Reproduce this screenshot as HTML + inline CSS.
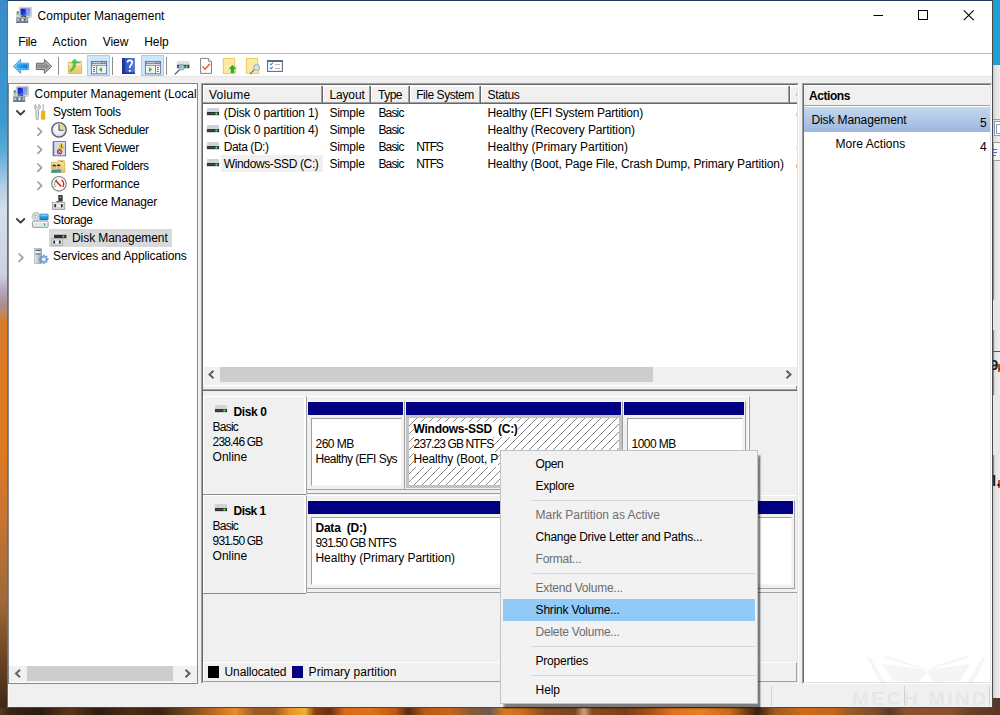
<!DOCTYPE html>
<html><head><meta charset="utf-8"><title>Computer Management</title>
<style>
html,body{margin:0;padding:0;}
body{width:1000px;height:715px;overflow:hidden;position:relative;background:#fff;font-family:"Liberation Sans",sans-serif;font-size:12px;color:#000;}
.a{position:absolute;box-sizing:border-box;}
.t{position:absolute;white-space:pre;line-height:16px;height:16px;}
svg{position:absolute;overflow:visible;}
#win{left:7px;top:0;width:986px;height:708px;background:#f0f0f0;border:1px solid #4a4a4a;border-top-color:#1b3a5c;border-left-color:rgba(20,30,45,.62);}
.hd{position:absolute;box-sizing:border-box;top:86px;height:18px;background:#f0f0f0;border-right:1px solid #696969;border-bottom:1px solid #696969;box-shadow:inset -1px -1px 0 #a0a0a0, inset 1px 1px 0 #fff;}
.sunk{border:1px solid #a0a0a0;border-right-color:#fff;border-bottom-color:#fff;}
.sunk2{border:1px solid #696969;border-right-color:#e3e3e3;border-bottom-color:#e3e3e3;}
.sep{position:absolute;left:531px;width:224px;height:1px;background:#d7d7d7;}
.navy{position:absolute;box-sizing:border-box;background:#000080;height:13px;}
.pbox{position:absolute;box-sizing:border-box;background:#fff;border:1px solid #a0a0a0;border-right-color:#f6f6f6;border-bottom-color:#f6f6f6;}
.cell{border-right:1px solid #a0a0a0;border-bottom:1px solid #a0a0a0;border-top:1px solid #f8f8f8;}

</style></head>
<body>
<div class="a" id="deskB" style="left:0;top:697px;width:1000px;height:18px;background:linear-gradient(90deg,#5a3a20 0px,#3a2414 10px,#2a1a10 40px,#5a3618 70px,#2e1c10 100px,#4a2c14 130px,#3a2210 160px,#7a4a20 190px,#c06a20 215px,#e88a28 235px,#9a5a28 255px,#a05a24 275px,#e8902a 290px,#f0b030 305px,#8a4010 315px,#6a3010 330px,#d86a18 345px,#e07018 370px,#c05814 395px,#5a2a10 408px,#b85a18 425px,#c86418 450px,#8a5a38 470px,#6a5a50 490px,#d87a20 505px,#c86a1c 525px,#8a4a20 545px,#7a4420 575px,#d0a080 584px,#8a4a20 592px,#7a4018 625px,#a85018 650px,#e07020 672px,#e88020 700px,#c86a18 730px,#6a3814 748px,#3a2010 758px,#a05a20 775px,#d06a18 805px,#c06418 835px,#9a5a28 850px,#7a4a28 878px,#5a3a28 890px,#8a5030 905px,#8a5030 950px,#6a4028 970px,#5a3624 1000px)"></div>
<div class="a" id="deskL" style="left:0;top:0;width:8px;height:708px;background:linear-gradient(#3a8cc8,#3c98d0 120px,#5aaad8 150px,#b0cce4 185px,#d4dfea 210px,#ccd0e0 275px,#b8a8bc 290px,#a88c90 305px,#c08a60 313px,#d87a28 322px,#e07a20 440px,#c87432 520px,#a06a38 600px,#6a4422 660px,#3a2412 715px)"></div>
<div class="a" id="deskR" style="left:992px;top:0;width:8px;height:698px;background:linear-gradient(90deg,#c4c4c4,#e4e4e4 4px,#ededed)"></div>
<div class="a" id="deskR2" style="left:992px;top:0;width:8px;height:65px;background:#1f9fd3"></div>
<div class="a" style="left:993px;top:119px;width:7px;height:1px;background:#9a9a9a"></div>
<div class="a" style="left:994px;top:121px;width:8px;height:15px;background:#fff;border:1px solid #8a9ab0"></div>
<div class="a" style="left:996px;top:124px;width:6px;height:10px;background:#fff;border:1px solid #8a9ab0"></div>
<div class="a" style="left:993px;top:142px;width:9px;height:19px;border:1px solid #a0a0a0;background:#f6f6f6"></div>
<div class="a" style="left:993px;top:149px;width:4px;height:1px;background:#3a6ac8"></div>
<div class="a" style="left:993px;top:152px;width:4px;height:1px;background:#3a6ac8"></div>
<div class="a" style="left:993px;top:155px;width:3px;height:1px;background:#3a6ac8"></div>
<div class="a" style="left:993px;top:160px;width:1px;height:320px;background:#8a8a8a"></div>
<div class="a" style="left:993px;top:351px;width:7px;height:1px;background:#555"></div>
<div class="a" style="left:993px;top:300px;width:7px;height:30px;background:#e6e6e6"></div>
<div class="a" style="left:993px;top:395px;width:7px;height:60px;background:#e8e8e8"></div>
<div class="a" style="left:998px;top:364px;width:2px;height:8px;background:#d04a10"></div>
<div class="a" style="left:998px;top:480px;width:2px;height:8px;background:#d04a10"></div>
<div class="a" style="left:993px;top:340px;width:7px;height:160px;overflow:hidden"><span class="t" style="left:-3px;top:17px;font-size:15px;font-weight:bold;color:#1a1a30">9.</span><span class="t" style="left:-1px;top:133px;font-size:15px;font-weight:bold;color:#1a1a30">l.</span></div>
<div class="a" id="win"></div>
<!-- title + menu -->
<div class="a" style="left:8px;top:1px;width:984px;height:52px;background:#fff"></div>
<div class="a" style="left:8px;top:53px;width:984px;height:1px;background:#b9b9b9"></div>
<!-- toolbar -->
<div class="a" style="left:8px;top:54px;width:984px;height:22px;background:#fff"></div>
<div class="a" style="left:8px;top:76px;width:984px;height:1px;background:#e6e6e6"></div>
<div class="a" style="left:87px;top:55px;width:23px;height:21px;background:#cce8ff;border:1px solid #99d1ff"></div>
<div class="a" style="left:141px;top:55px;width:23px;height:21px;background:#cce8ff;border:1px solid #99d1ff"></div>
<div class="a" style="left:58px;top:57px;width:1px;height:18px;background:#8d8d8d"></div>
<div class="a" style="left:112px;top:57px;width:1px;height:18px;background:#8d8d8d"></div>
<div class="a" style="left:166px;top:57px;width:1px;height:18px;background:#8d8d8d"></div>
<!-- tree panel -->
<div class="a" id="tree" style="left:8px;top:83px;width:190px;height:601px;background:#fff;border:1px solid #828790"></div>
<div class="a" style="left:49px;top:229px;width:123px;height:18px;background:#d9d9d9"></div>
<!-- tree hscroll -->
<div class="a" style="left:9px;top:666px;width:188px;height:16px;background:#f0f0f0"></div>
<div class="a" style="left:27px;top:666px;width:146px;height:15px;background:#cdcdcd"></div>
<!-- list panel -->
<div class="a sunk" style="left:201px;top:83px;width:598px;height:601px;"></div>
<div class="a sunk2" style="left:202px;top:84px;width:596px;height:599px;background:#fff"></div>
<div class="hd" style="left:203px;width:120px;"></div>
<div class="hd" style="left:323px;width:48px;"></div>
<div class="hd" style="left:371px;width:39px;"></div>
<div class="hd" style="left:410px;width:71px;"></div>
<div class="hd" style="left:481px;width:309px;"></div>
<div class="hd" style="left:790px;width:7px;border-right:none;box-shadow:inset 0 -1px 0 #a0a0a0, inset 1px 1px 0 #fff"></div>
<div class="a" style="left:203px;top:85px;width:594px;height:1px;background:#fff"></div>
<div class="a" style="left:221px;top:155px;width:102px;height:17px;background:#f0f0f0"></div>
<div class="a" style="left:796px;top:93px;width:1px;height:3px;background:#f6bd7c"></div><div class="a" style="left:796px;top:113px;width:1px;height:3px;background:#f6bd7c"></div><div class="a" style="left:796px;top:147px;width:1px;height:1px;background:#f6bd7c"></div><div class="a" style="left:796px;top:164px;width:1px;height:4px;background:#f6bd7c"></div>
<!-- list hscroll -->
<div class="a" style="left:204px;top:367px;width:593px;height:18px;background:#f0f0f0"></div>
<div class="a" style="left:220px;top:367px;width:433px;height:15px;background:#cdcdcd"></div>
<!-- splitter -->
<div class="a" style="left:203px;top:385px;width:594px;height:299px;background:#f0f0f0"></div>
<div class="a" style="left:203px;top:385px;width:594px;height:1px;background:#fff"></div>
<div class="a" style="left:203px;top:389px;width:594px;height:1px;background:#a4a4a4"></div>
<div class="a" style="left:203px;top:390px;width:594px;height:1px;background:#6a6a6a"></div>
<div class="a" style="left:796px;top:386px;width:1px;height:4px;background:#8a8a8a"></div>
<!-- disk 0 -->
<div class="a" style="left:203px;top:396px;width:101px;height:98px;background:#f0f0f0;border-top:1px solid #fff;border-left:1px solid #fff"></div>
<div class="a" style="left:203px;top:494px;width:103px;height:1px;background:#8c8c8c"></div>
<div class="a" style="left:304px;top:397px;width:2px;height:97px;background:#fff"></div>
<div class="a" style="left:306px;top:396px;width:444px;height:98px;border-left:1px solid #a0a0a0;border-top:1px solid #fff;border-right:1px solid #a0a0a0;border-bottom:1px solid #a0a0a0;box-shadow:inset -1px 0 0 #fff"></div>
<div class="a cell" style="left:307px;top:401px;width:98px;height:89px"></div>
<div class="navy" style="left:308px;top:402px;width:95px"></div>
<div class="pbox" style="left:311px;top:418px;width:91px;height:68px"></div>
<div class="a cell" style="left:405px;top:401px;width:218px;height:89px"></div>
<div class="navy" style="left:406px;top:402px;width:215px"></div>
<div class="a" id="hatch" style="left:406px;top:415px;width:216px;height:73px;border:3px solid #c3c3c3;background:#fff repeating-linear-gradient(135deg,rgba(255,255,255,0) 0,rgba(255,255,255,0) 5px,#8a8a8a 5px,#8a8a8a 5.657px)"></div>
<div class="a cell" style="left:623px;top:401px;width:123px;height:89px"></div>
<div class="navy" style="left:624px;top:402px;width:120px"></div>
<div class="pbox" style="left:627px;top:418px;width:116px;height:68px"></div>
<!-- disk 1 -->
<div class="a" style="left:203px;top:495px;width:101px;height:98px;background:#f0f0f0;border-top:1px solid #fff;border-left:1px solid #fff"></div>
<div class="a" style="left:203px;top:593px;width:103px;height:1px;background:#8c8c8c"></div>
<div class="a" style="left:304px;top:496px;width:2px;height:97px;background:#fff"></div>
<div class="a" style="left:306px;top:495px;width:491px;height:98px;border-left:1px solid #a0a0a0;border-top:1px solid #fff;border-bottom:1px solid #a0a0a0;"></div>
<div class="a cell" style="left:307px;top:500px;width:488px;height:89px"></div>
<div class="navy" style="left:308px;top:501px;width:485px"></div>
<div class="pbox" style="left:311px;top:517px;width:481px;height:68px"></div>
<!-- legend -->
<div class="a" style="left:203px;top:662px;width:594px;height:20px;border-top:1px solid #fff;border-left:1px solid #fff;border-right:1px solid #a0a0a0;border-bottom:1px solid #a0a0a0"></div>
<div class="a" style="left:208px;top:666px;width:11px;height:12px;background:#000"></div>
<div class="a" style="left:292px;top:666px;width:11px;height:12px;background:#000080"></div>
<!-- actions panel -->
<div class="a sunk" style="left:802px;top:83px;width:190px;height:601px;"></div>
<div class="a sunk2" style="left:803px;top:84px;width:188px;height:599px;background:#fff"></div>
<div class="a" style="left:804px;top:86px;width:186px;height:19px;background:#f0f0f0"></div>
<div class="a" style="left:804px;top:105px;width:186px;height:1px;background:#a0a0a0"></div>
<div class="a" style="left:804px;top:107px;width:186px;height:25px;background:linear-gradient(#c4d7ec,#9db8df)"></div>
<!-- status bar -->
<div class="a" style="left:8px;top:685px;width:984px;height:22px;background:#f0f0f0"></div>
<div class="a" style="left:8px;top:684px;width:1px;height:23px;background:#fafafa"></div>
<div class="a" style="left:771px;top:686px;width:1px;height:20px;background:#d4d4d4"></div>
<div class="a" style="left:904px;top:686px;width:1px;height:20px;background:#d4d4d4"></div>
<div class="a" style="left:989px;top:686px;width:1px;height:20px;background:#d0d0d0"></div>
<!-- watermark -->
<div class="a" style="left:840px;top:640px;width:152px;height:67px;overflow:hidden;opacity:.036">
<svg width="152" height="67" viewBox="840 640 152 67" style="left:0;top:0"><path d="M882.4 664L923.2 669.6L926.4 672L918.4 682.4L892.8 680.8ZM970.4 664L929.6 669.6L926.4 672L934.4 682.4L960 680.8ZM885.6 655.2L924 668.4L922 669L884 658ZM967.2 655.2L928.8 668.4L930.8 669L968.8 658ZM867 657.6L870 657.6L886 684L881 684ZM985.8 657.6L982.8 657.6L966.8 684L971.8 684Z" fill="#000"/></svg>
<span class="t" style="left:12px;top:50px;font-size:18px;font-weight:bold;letter-spacing:2px;line-height:18px;height:18px;transform:scaleX(1.12);transform-origin:0 0">MECH MIND</span>
</div>
<svg width="1000" height="715" viewBox="0 0 1000 715" style="left:0;top:0">
<defs>
<linearGradient id="scr" x1="0" y1="0" x2="1" y2="1"><stop offset="0" stop-color="#0a14c8"/><stop offset=".45" stop-color="#1a3be0"/><stop offset="1" stop-color="#6f8ff0"/></linearGradient>
<linearGradient id="barr" x1="0" y1="0" x2="0" y2="1"><stop offset="0" stop-color="#6cc4f6"/><stop offset=".5" stop-color="#1e9af0"/><stop offset="1" stop-color="#3aa8f2"/></linearGradient>
<linearGradient id="garr" x1="0" y1="0" x2="0" y2="1"><stop offset="0" stop-color="#8a8a8a"/><stop offset=".5" stop-color="#a8a8a8"/><stop offset="1" stop-color="#8e8e8e"/></linearGradient>
<linearGradient id="fold" x1="0" y1="0" x2="0" y2="1"><stop offset="0" stop-color="#fbe3a0"/><stop offset="1" stop-color="#e9c467"/></linearGradient>
<linearGradient id="help" x1="0" y1="0" x2="1" y2="0"><stop offset="0" stop-color="#2a49b8"/><stop offset="1" stop-color="#5578e0"/></linearGradient>
<radialGradient id="clk" cx=".4" cy=".4" r=".7"><stop offset="0" stop-color="#ffffff"/><stop offset="1" stop-color="#d4deea"/></radialGradient>
<linearGradient id="srv" x1="0" y1="0" x2="1" y2="0"><stop offset="0" stop-color="#e6eaee"/><stop offset="1" stop-color="#98a4b0"/></linearGradient>
<linearGradient id="bdrv" x1="0" y1="0" x2="0" y2="1"><stop offset="0" stop-color="#5cc0f0"/><stop offset="1" stop-color="#1478c0"/></linearGradient>
<linearGradient id="barr2" x1="0" y1="0" x2="1" y2="0"><stop offset="0" stop-color="#4cb4f5"/><stop offset=".55" stop-color="#1a94ee"/><stop offset="1" stop-color="#0a74d4"/></linearGradient><linearGradient id="garr2" x1="0" y1="0" x2="0" y2="1"><stop offset="0" stop-color="#9a9a9a"/><stop offset=".5" stop-color="#8a8a8a"/><stop offset="1" stop-color="#a4a4a4"/></linearGradient>
</defs>
<g transform="translate(16,7)">
<rect x="3.2" y="0.2" width="12.4" height="10.2" rx="0.8" fill="#d9d6cb" stroke="#b9b6a8" stroke-width="0.5"/>
<rect x="4.6" y="1.6" width="9.6" height="7" fill="url(#scr)"/>
<path d="M9.3 1.6H14.2V8.6H10.6Z" fill="#9fb6f2" opacity=".75"/>
<rect x="0.4" y="4.3" width="2.9" height="5.8" fill="#c9c9d0"/><rect x="1" y="4.6" width="1.6" height="1.6" fill="#55556a"/><rect x="0.6" y="6.4" width="2.4" height="1.2" fill="#3fe03f"/>
<path d="M4 10.6Q6 8.2 8 8.6Q10 8.6 10.6 10.6Z" fill="#1a1a1a"/><rect x="5.6" y="9.6" width="3.2" height="1" fill="#f4f4f4"/>
<rect x="0.2" y="10.2" width="12" height="5.6" fill="#7d8c99"/><rect x="0.2" y="10.2" width="12" height="1.1" fill="#a9b6c0"/><rect x="0.2" y="14.8" width="12" height="1" fill="#5f6e7b"/>
<rect x="1" y="12" width="10.4" height="1.7" fill="#b9c4cd"/><rect x="3.6" y="11.8" width="1.3" height="2.1" fill="#4c5964"/><rect x="6" y="11.8" width="1" height="2.1" fill="#eef2f5"/><rect x="8" y="11.8" width="1.3" height="2.1" fill="#4c5964"/>
</g>
<g transform="translate(13,86)">
<rect x="3.2" y="0.2" width="12.4" height="10.2" rx="0.8" fill="#d9d6cb" stroke="#b9b6a8" stroke-width="0.5"/>
<rect x="4.6" y="1.6" width="9.6" height="7" fill="url(#scr)"/>
<path d="M9.3 1.6H14.2V8.6H10.6Z" fill="#9fb6f2" opacity=".75"/>
<rect x="0.4" y="4.3" width="2.9" height="5.8" fill="#c9c9d0"/><rect x="1" y="4.6" width="1.6" height="1.6" fill="#55556a"/><rect x="0.6" y="6.4" width="2.4" height="1.2" fill="#3fe03f"/>
<path d="M4 10.6Q6 8.2 8 8.6Q10 8.6 10.6 10.6Z" fill="#1a1a1a"/><rect x="5.6" y="9.6" width="3.2" height="1" fill="#f4f4f4"/>
<rect x="0.2" y="10.2" width="12" height="5.6" fill="#7d8c99"/><rect x="0.2" y="10.2" width="12" height="1.1" fill="#a9b6c0"/><rect x="0.2" y="14.8" width="12" height="1" fill="#5f6e7b"/>
<rect x="1" y="12" width="10.4" height="1.7" fill="#b9c4cd"/><rect x="3.6" y="11.8" width="1.3" height="2.1" fill="#4c5964"/><rect x="6" y="11.8" width="1" height="2.1" fill="#eef2f5"/><rect x="8" y="11.8" width="1.3" height="2.1" fill="#4c5964"/>
</g>
<path d="M13.3 66.4L20.6 59.4V63.2H28.6V69.6H20.6V73.3Z" fill="#86cdf9" stroke="#3c8fdc" stroke-width="0.9" stroke-linejoin="round"/>
<path d="M15.4 66.4L19.6 62.3V64.3H27.6V68.5H19.6V70.5Z" fill="url(#barr2)"/>
<path d="M51.8 66.4L44.4 59.4V63.2H36.4V69.6H44.4V73.3Z" fill="#b9b9b9" stroke="#595959" stroke-width="0.9" stroke-linejoin="round"/>
<path d="M49.7 66.4L45.4 62.3V64.3H37.5V68.5H45.4V70.5Z" fill="url(#garr2)"/>
<path d="M68.3 62.3H74.5L75.5 61.2H81V62.3H81.6V73.6H68.3Z" fill="url(#fold)" stroke="#d2a849" stroke-width="0.7"/>
<rect x="68.6" y="64" width="12.8" height="0.8" fill="#fff4cf" opacity=".8"/>
<rect x="77" y="62.1" width="2.6" height="1" fill="#3f8be0"/>
<path d="M70 70.6Q73.6 68 73.6 62.8H71.6L74.6 58.9L77.4 62.8H75.6Q75.8 69 70.6 71.4Z" fill="#3bd23b" stroke="#2aa52a" stroke-width="0.5"/>
<g transform="translate(91,61)"><rect x="0.4" y="0.4" width="15.2" height="12.4" fill="#fbfbfb" stroke="#66758a" stroke-width="0.9"/><rect x="0.4" y="0.4" width="15.2" height="4.4" fill="#6d7b8f"/><rect x="1.4" y="1.3" width="9.2" height="0.9" fill="#e8ecf1"/><rect x="11.8" y="1.2" width="1" height="1" fill="#e8ecf1"/><rect x="13.6" y="1.2" width="1" height="1" fill="#e8ecf1"/><rect x="1.2" y="3.2" width="13.6" height="0.9" fill="#f4f6f8"/>
<rect x="5.3" y="4.8" width="0.9" height="8" fill="#66758a"/>
<rect x="2" y="6" width="2" height="1" fill="#3f78c6"/>
<rect x="2" y="8" width="2" height="1" fill="#3f78c6"/>
<rect x="2" y="10" width="2" height="1" fill="#3f78c6"/>
<rect x="6.8" y="5.4" width="7.4" height="6.6" fill="#f0f0f0"/><path d="M11 5.9V11.3L7.9 8.6Z" fill="#3fb53f"/>
</g>
<rect x="122" y="58" width="12.9" height="15.9" fill="url(#help)"/><rect x="122" y="58" width="2.9" height="15.9" fill="#20369a"/><rect x="122" y="72.6" width="12.9" height="1.3" fill="#1d2f86"/>
<path d="M127.4 62.6Q127.4 60.4 129.8 60.4Q132.2 60.4 132.2 62.6Q132.2 64.2 130.8 65.2Q129.8 66 129.8 68" fill="none" stroke="#fff" stroke-width="1.7"/><circle cx="129.8" cy="70.8" r="1.1" fill="#fff"/>
<g transform="translate(145,61)"><rect x="0.4" y="0.4" width="15.2" height="12.4" fill="#fbfbfb" stroke="#66758a" stroke-width="0.9"/><rect x="0.4" y="0.4" width="15.2" height="4.4" fill="#6d7b8f"/><rect x="1.4" y="1.3" width="9.2" height="0.9" fill="#e8ecf1"/><rect x="11.8" y="1.2" width="1" height="1" fill="#e8ecf1"/><rect x="13.6" y="1.2" width="1" height="1" fill="#e8ecf1"/><rect x="1.2" y="3.2" width="13.6" height="0.9" fill="#f4f6f8"/>
<rect x="10" y="4.8" width="0.9" height="8" fill="#66758a"/>
<rect x="12" y="6" width="2" height="1" fill="#3f78c6"/>
<rect x="12" y="8" width="2" height="1" fill="#3f78c6"/>
<rect x="12" y="10" width="2" height="1" fill="#3f78c6"/>
<rect x="1.6" y="5.4" width="7.8" height="6.6" fill="#f0f0f0"/><path d="M4 5.9V11.3L7.1 8.6Z" fill="#3fb53f"/>
</g>
<path d="M177.4 61H189L189.9 64.4V68.4H176.5V64.4Z" fill="#dde0e5"/><rect x="177.2" y="64.8" width="12" height="3.3" fill="#2e2e2e"/><circle cx="186.6" cy="66.5" r="1.5" fill="#1fa02c"/><circle cx="186.6" cy="66.5" r="0.9" fill="#4dff5a"/>
<path d="M179.6 69.6L175.2 74" stroke="#50606e" stroke-width="1.3" stroke-linecap="round"/><circle cx="181.5" cy="67.3" r="2.9" fill="#a9c6e2" fill-opacity=".92" stroke="#7f9bb8" stroke-width="0.8"/>
<path d="M200.6 58.4H208.4L211.5 61.5V73.4H200.6Z" fill="#fdfdfd" stroke="#757575" stroke-width="0.9"/><path d="M208.4 58.4V61.5H211.5" fill="#e9e9e9" stroke="#757575" stroke-width="0.7"/><path d="M202.6 66.4L205 69.2L210 63.8" fill="none" stroke="#ea5514" stroke-width="1.4"/>
<path d="M223.3 58.4H234.7V66H235.8V73.4H223.3Z" fill="#fde9a6" stroke="#ebc545" stroke-width="0.9"/>
<path d="M232.4 64.8L236.2 69H234.2V73H230.8V69H228.8Z" fill="#22b422"/>
<path d="M246.4 58.4H257.7V66H258.8V73.4H246.4Z" fill="#fde9a6" stroke="#ebc545" stroke-width="0.9"/>
<path d="M254.6 69.4L250.4 73.6" stroke="#5f6e7c" stroke-width="1.2" stroke-linecap="round"/><circle cx="256.6" cy="67.4" r="3" fill="#cfe3f2" stroke="#8da2b8" stroke-width="0.9"/>
<rect x="267.6" y="60.6" width="14.8" height="10.8" fill="#fff" stroke="#5d656e" stroke-width="1"/><rect x="267.2" y="60.2" width="15.6" height="1.8" fill="#5d656e"/>
<path d="M269.8 63.6L271 64.8L273 62.6M269.8 67.6L271 68.8L273 66.6" fill="none" stroke="#3a8ee6" stroke-width="1.1"/><rect x="275" y="64" width="5" height="0.8" fill="#a8a8a8"/><rect x="275" y="68" width="5" height="0.8" fill="#a8a8a8"/>
<path d="M16.9 111.0L20.6 114.69999999999999L24.299999999999997 111.0" fill="none" stroke="#3c3c3c" stroke-width="1.8" stroke-linejoin="round" stroke-linecap="round"/>
<path d="M16.9 219.0L20.6 222.7L24.299999999999997 219.0" fill="none" stroke="#3c3c3c" stroke-width="1.8" stroke-linejoin="round" stroke-linecap="round"/>
<path d="M37.9 128.0L41.6 131.70000000000002L37.9 135.4" fill="none" stroke="#a0a0a0" stroke-width="1.7" stroke-linejoin="round" stroke-linecap="round"/>
<path d="M37.9 146.0L41.6 149.70000000000002L37.9 153.4" fill="none" stroke="#a0a0a0" stroke-width="1.7" stroke-linejoin="round" stroke-linecap="round"/>
<path d="M37.9 164.0L41.6 167.70000000000002L37.9 171.4" fill="none" stroke="#a0a0a0" stroke-width="1.7" stroke-linejoin="round" stroke-linecap="round"/>
<path d="M37.9 182.0L41.6 185.70000000000002L37.9 189.4" fill="none" stroke="#a0a0a0" stroke-width="1.7" stroke-linejoin="round" stroke-linecap="round"/>
<path d="M19.1 254.0L22.8 257.7L19.1 261.4" fill="none" stroke="#a0a0a0" stroke-width="1.7" stroke-linejoin="round" stroke-linecap="round"/>
<path d="M35.6 104.6Q34 106.2 34.6 108.2Q35 109.4 36 110V118.6Q36 119.6 37.2 119.6Q38.4 119.6 38.4 118.6V110Q40.2 109.2 40.4 107.2Q40.4 105.4 39 104.4L38.8 107L37.4 108L36 107Z" fill="#e6e8ea" stroke="#84888c" stroke-width="0.7"/>
<rect x="42.7" y="104" width="0.9" height="7.2" fill="#9aa0a6"/><path d="M41.4 111.2H44.9V113.4H44.3V114.6H45V118.6Q45 119.7 43.2 119.7Q41.3 119.7 41.3 118.6V114.6H42V113.4H41.4Z" fill="#f2b50a" stroke="#c98d04" stroke-width="0.4"/>
<circle cx="59" cy="129.8" r="7.2" fill="url(#clk)" stroke="#5c5c5c" stroke-width="1.4"/><path d="M59 129.8V123.8A6 6 0 0 1 65 129.8Z" fill="#f1d283"/><circle cx="59" cy="129.8" r="6" fill="none" stroke="#c3cede" stroke-width="0.6"/><path d="M59 124.6V130.2H63.4" fill="none" stroke="#3b4f74" stroke-width="1.1"/>
<rect x="53.6" y="141.6" width="12" height="14.2" fill="#eef3fb" stroke="#5a6fb4" stroke-width="1"/>
<rect x="54.4" y="143.6" width="10.6" height="0.8" fill="#a3b6e6"/>
<rect x="54.4" y="145.6" width="10.6" height="0.8" fill="#a3b6e6"/>
<rect x="54.4" y="147.6" width="10.6" height="0.8" fill="#a3b6e6"/>
<rect x="54.4" y="149.6" width="10.6" height="0.8" fill="#a3b6e6"/>
<rect x="54.4" y="151.6" width="10.6" height="0.8" fill="#a3b6e6"/>
<rect x="54.4" y="153.6" width="10.6" height="0.8" fill="#a3b6e6"/>
<rect x="52.2" y="142.4" width="2.2" height="0.9" fill="#5f6676"/>
<rect x="52.2" y="144.4" width="2.2" height="0.9" fill="#5f6676"/>
<rect x="52.2" y="146.4" width="2.2" height="0.9" fill="#5f6676"/>
<rect x="52.2" y="148.4" width="2.2" height="0.9" fill="#5f6676"/>
<rect x="52.2" y="150.4" width="2.2" height="0.9" fill="#5f6676"/>
<rect x="52.2" y="152.4" width="2.2" height="0.9" fill="#5f6676"/>
<rect x="52.2" y="154.4" width="2.2" height="0.9" fill="#5f6676"/>
<path d="M61.4 142.8L64.4 148.4H58.4Z" fill="#f4d21e" stroke="#c7a40c" stroke-width="0.4"/><rect x="61" y="144.6" width="0.8" height="2" fill="#222"/><rect x="61" y="147" width="0.8" height="0.7" fill="#222"/>
<circle cx="59.6" cy="151.7" r="2.6" fill="#d9262c"/><path d="M58.5 150.6L60.7 152.8M60.7 150.6L58.5 152.8" stroke="#fff" stroke-width="0.8"/>
<path d="M51.4 162.4H57.2L58.4 160.6H64.2V162.4H64.8V172.4H51.4Z" fill="url(#fold)" stroke="#d2a849" stroke-width="0.7"/><rect x="60.4" y="161.1" width="2.4" height="0.9" fill="#3f8be0"/>
<circle cx="54.2" cy="167" r="1.9" fill="#e6b58e"/><path d="M52.3 166.6Q52.3 164.6 54.2 164.6Q56.1 164.6 56.1 166.6Q54.2 165.6 52.3 166.6Z" fill="#2a2018"/><path d="M51.4 172.8Q51.4 169.4 54.2 169.4Q57 169.4 57 172.8Z" fill="#2fa356"/>
<circle cx="58.6" cy="166.6" r="1.9" fill="#e6b58e"/><path d="M56.7 166.2Q56.7 164.2 58.6 164.2Q60.5 164.2 60.5 166.2Q58.6 165.2 56.7 166.2Z" fill="#2a2018"/><path d="M55.8 172.4Q55.8 169 58.6 169Q61.4 169 61.4 172.4Z" fill="#3b8fd0"/>
<circle cx="59" cy="183.8" r="7.3" fill="#fbfbfb" stroke="#808080" stroke-width="1.1"/><path d="M61.6 180A5 5 0 0 1 62.8 186.8" fill="none" stroke="#e02020" stroke-width="1.5"/><path d="M55.4 186.8A5 5 0 0 1 57 179.6" fill="none" stroke="#3b9a4a" stroke-width="1.3" stroke-dasharray="1 0.8"/><path d="M55.6 180.4L61.2 186.4" stroke="#e01818" stroke-width="1.5"/>
<rect x="58.3" y="195" width="4.4" height="6.6" fill="#3a3a3a"/><circle cx="60.5" cy="197.3" r="0.8" fill="#4dff5a"/><rect x="56.4" y="201" width="2.4" height="1" fill="#555"/>
<rect x="52.4" y="202.4" width="12.4" height="7.2" fill="#d4d4d4" stroke="#8e8e8e" stroke-width="0.7"/><rect x="52.8" y="202.8" width="11.6" height="1" fill="#ececec"/><rect x="54.4" y="204.2" width="1.6" height="3" fill="#2a2a2a"/><rect x="61" y="204.2" width="1.6" height="3" fill="#2a2a2a"/><rect x="56.8" y="204.6" width="3.4" height="2.4" fill="#f2f2f2"/>
<circle cx="36.4" cy="216.8" r="4.3" fill="#d9dce0" stroke="#9a9ea4" stroke-width="0.6"/><circle cx="36.4" cy="216.8" r="1.4" fill="#f5f5f5" stroke="#8a8e94" stroke-width="0.5"/><circle cx="34" cy="214.6" r="0.7" fill="#4ad84a"/>
<rect x="39.8" y="214" width="8.4" height="6" rx="0.8" fill="url(#bdrv)" stroke="#1b6aa8" stroke-width="0.5"/><rect x="40.6" y="214.8" width="6.8" height="1" fill="#9adcf8" opacity=".8"/>
<rect x="32.4" y="221.2" width="15.8" height="6.2" rx="1" fill="#e4e6e8" stroke="#84888e" stroke-width="0.8"/><rect x="33" y="221.8" width="14.6" height="1.2" fill="#f8f8f8"/><rect x="44" y="223.2" width="1.2" height="2.8" fill="#2fbf3a"/>
<path d="M54.6 231.4H65.6L66.4 234.8H53.8Z" fill="#dcdfe3"/><rect x="54" y="234.8" width="12.4" height="3.4" fill="#2e2e2e"/><circle cx="63.4" cy="236.5" r="1" fill="#4dff5a"/>
<rect x="51.4" y="238.8" width="11.4" height="6.8" fill="#d8d8d8" stroke="#9a9a9a" stroke-width="0.6"/><rect x="53.4" y="240.6" width="1.6" height="3" fill="#2a2a2a"/><rect x="59" y="240.6" width="1.6" height="3" fill="#2a2a2a"/><rect x="55.6" y="241" width="2.8" height="2.2" fill="#f4f4f4"/>
<rect x="34.4" y="248.6" width="7.2" height="15" fill="url(#srv)" stroke="#8a949e" stroke-width="0.5"/><rect x="35.4" y="249.8" width="5.2" height="1" fill="#4a545e"/><rect x="35.4" y="253.6" width="5.2" height="0.9" fill="#5a646e"/><rect x="35.4" y="251.4" width="5.2" height="1.4" fill="#f4f6f8"/><rect x="39" y="261.6" width="1.6" height="1" fill="#3fdc3f"/>
<path d="M48.16 258.73L48.16 259.87L46.89 260.13L46.57 260.90L47.29 261.98L46.48 262.79L45.40 262.07L44.63 262.39L44.37 263.66L43.23 263.66L42.97 262.39L42.20 262.07L41.12 262.79L40.31 261.98L41.03 260.90L40.71 260.13L39.44 259.87L39.44 258.73L40.71 258.47L41.03 257.70L40.31 256.62L41.12 255.81L42.20 256.53L42.97 256.21L43.23 254.94L44.37 254.94L44.63 256.21L45.40 256.53L46.48 255.81L47.29 256.62L46.57 257.70L46.89 258.47Z" fill="#7fa9dc" stroke="#4a7ab8" stroke-width="0.5"/>
<circle cx="43.8" cy="259.3" r="2.1" fill="#fff" stroke="#5a8ac8" stroke-width="0.5"/>
<g transform="translate(206,108)"><path d="M1.3 0H12.7L13.6 3.6V7.6H0.4V3.6Z" fill="#d9dce2"/><path d="M1.5 0H12.5L13 3.8H1Z" fill="#cfd3d9"/><rect x="1" y="4" width="12" height="3.1" fill="#303030"/><rect x="1" y="5" width="8" height="1" fill="#484848"/><circle cx="10.4" cy="5.6" r="1.4" fill="#1c8f28"/><circle cx="10.4" cy="5.6" r="0.85" fill="#4dff5a"/></g>
<g transform="translate(206,125)"><path d="M1.3 0H12.7L13.6 3.6V7.6H0.4V3.6Z" fill="#d9dce2"/><path d="M1.5 0H12.5L13 3.8H1Z" fill="#cfd3d9"/><rect x="1" y="4" width="12" height="3.1" fill="#303030"/><rect x="1" y="5" width="8" height="1" fill="#484848"/><circle cx="10.4" cy="5.6" r="1.4" fill="#1c8f28"/><circle cx="10.4" cy="5.6" r="0.85" fill="#4dff5a"/></g>
<g transform="translate(206,142)"><path d="M1.3 0H12.7L13.6 3.6V7.6H0.4V3.6Z" fill="#d9dce2"/><path d="M1.5 0H12.5L13 3.8H1Z" fill="#cfd3d9"/><rect x="1" y="4" width="12" height="3.1" fill="#303030"/><rect x="1" y="5" width="8" height="1" fill="#484848"/><circle cx="10.4" cy="5.6" r="1.4" fill="#1c8f28"/><circle cx="10.4" cy="5.6" r="0.85" fill="#4dff5a"/></g>
<g transform="translate(206,159)"><path d="M1.3 0H12.7L13.6 3.6V7.6H0.4V3.6Z" fill="#d9dce2"/><path d="M1.5 0H12.5L13 3.8H1Z" fill="#cfd3d9"/><rect x="1" y="4" width="12" height="3.1" fill="#303030"/><rect x="1" y="5" width="8" height="1" fill="#484848"/><circle cx="10.4" cy="5.6" r="1.4" fill="#1c8f28"/><circle cx="10.4" cy="5.6" r="0.85" fill="#4dff5a"/></g>
<g transform="translate(214,405)"><path d="M1.3 0H12.7L13.6 3.6V7.6H0.4V3.6Z" fill="#d9dce2"/><path d="M1.5 0H12.5L13 3.8H1Z" fill="#cfd3d9"/><rect x="1" y="4" width="12" height="3.1" fill="#303030"/><rect x="1" y="5" width="8" height="1" fill="#484848"/><circle cx="10.4" cy="5.6" r="1.4" fill="#1c8f28"/><circle cx="10.4" cy="5.6" r="0.85" fill="#4dff5a"/></g>
<g transform="translate(214,504)"><path d="M1.3 0H12.7L13.6 3.6V7.6H0.4V3.6Z" fill="#d9dce2"/><path d="M1.5 0H12.5L13 3.8H1Z" fill="#cfd3d9"/><rect x="1" y="4" width="12" height="3.1" fill="#303030"/><rect x="1" y="5" width="8" height="1" fill="#484848"/><circle cx="10.4" cy="5.6" r="1.4" fill="#1c8f28"/><circle cx="10.4" cy="5.6" r="0.85" fill="#4dff5a"/></g>
<path d="M873.5 15.5H883" stroke="#000" stroke-width="1"/><rect x="918.5" y="10.5" width="9" height="9" fill="none" stroke="#000" stroke-width="1"/><path d="M963.8 10.3L973.7 20.2M973.7 10.3L963.8 20.2" stroke="#000" stroke-width="1.1"/>
<path d="M20.0 669.8L16.0 673.5L20.0 677.1999999999999" fill="none" stroke="#606060" stroke-width="2"/>
<path d="M185.5 669.8L189.5 673.5L185.5 677.1999999999999" fill="none" stroke="#606060" stroke-width="2"/>
<path d="M213.5 370.8L209.5 374.5L213.5 378.2" fill="none" stroke="#606060" stroke-width="2"/>
<path d="M786.5 370.8L790.5 374.5L786.5 378.2" fill="none" stroke="#606060" stroke-width="2"/>
</svg>
<!-- context menu -->
<div class="a" id="menu" style="left:500px;top:450px;width:258px;height:254px;background:#f2f2f2;border:1px solid #c2c2c2;box-shadow:2.5px 4.5px 1.6px rgba(0,0,0,.48)"></div>
<div class="a" style="left:503px;top:599px;width:252px;height:22px;background:#91c9f7"></div>
<div class="sep" style="top:500px"></div>
<div class="sep" style="top:573px"></div>
<div class="sep" style="top:646px"></div>
<div class="sep" style="top:675px"></div>
<span class="t" style="left:37.5px;top:8px;letter-spacing:0.049px;">Computer Management</span>
<span class="t" style="left:18.3px;top:34px;letter-spacing:-0.211px;">File</span>
<span class="t" style="left:52.5px;top:34px;letter-spacing:0.190px;">Action</span>
<span class="t" style="left:102.8px;top:34px;letter-spacing:-0.074px;">View</span>
<span class="t" style="left:144.3px;top:34px;letter-spacing:-0.097px;">Help</span>
<span class="t" style="left:34.6px;top:86px;letter-spacing:-0.004px;">Computer Management (Local</span>
<span class="t" style="left:53px;top:104px;letter-spacing:-0.287px;">System Tools</span>
<span class="t" style="left:72px;top:122px;letter-spacing:-0.382px;">Task Scheduler</span>
<span class="t" style="left:72px;top:140px;letter-spacing:-0.299px;">Event Viewer</span>
<span class="t" style="left:72px;top:158px;letter-spacing:-0.382px;">Shared Folders</span>
<span class="t" style="left:72px;top:176px;letter-spacing:-0.091px;">Performance</span>
<span class="t" style="left:72px;top:194px;letter-spacing:-0.170px;">Device Manager</span>
<span class="t" style="left:53px;top:212px;letter-spacing:-0.333px;">Storage</span>
<span class="t" style="left:72px;top:230px;letter-spacing:-0.068px;">Disk Management</span>
<span class="t" style="left:53px;top:248px;letter-spacing:-0.122px;">Services and Applications</span>
<span class="t" style="left:209px;top:87px;letter-spacing:0.228px;">Volume</span>
<span class="t" style="left:329.4px;top:87px;letter-spacing:-0.122px;">Layout</span>
<span class="t" style="left:378px;top:87px;letter-spacing:-0.504px;">Type</span>
<span class="t" style="left:416.2px;top:87px;letter-spacing:-0.453px;">File System</span>
<span class="t" style="left:487.5px;top:87px;letter-spacing:-0.339px;">Status</span>
<span class="t" style="left:223.8px;top:105px;letter-spacing:-0.134px;">(Disk 0 partition 1)</span>
<span class="t" style="left:329.4px;top:105px;letter-spacing:-0.231px;">Simple</span>
<span class="t" style="left:378.4px;top:105px;letter-spacing:-0.829px;">Basic</span>
<span class="t" style="left:487.5px;top:105px;letter-spacing:-0.196px;">Healthy (EFI System Partition)</span>
<span class="t" style="left:223.8px;top:122px;letter-spacing:-0.134px;">(Disk 0 partition 4)</span>
<span class="t" style="left:329.4px;top:122px;letter-spacing:-0.231px;">Simple</span>
<span class="t" style="left:378.4px;top:122px;letter-spacing:-0.829px;">Basic</span>
<span class="t" style="left:487.5px;top:122px;letter-spacing:-0.092px;">Healthy (Recovery Partition)</span>
<span class="t" style="left:223.8px;top:139px;letter-spacing:-0.432px;">Data (D:)</span>
<span class="t" style="left:329.4px;top:139px;letter-spacing:-0.231px;">Simple</span>
<span class="t" style="left:378.4px;top:139px;letter-spacing:-0.829px;">Basic</span>
<span class="t" style="left:416.2px;top:139px;letter-spacing:-1.261px;">NTFS</span>
<span class="t" style="left:487.5px;top:139px;letter-spacing:-0.008px;">Healthy (Primary Partition)</span>
<span class="t" style="left:223.8px;top:156px;letter-spacing:-0.374px;">Windows-SSD (C:)</span>
<span class="t" style="left:329.4px;top:156px;letter-spacing:-0.231px;">Simple</span>
<span class="t" style="left:378.4px;top:156px;letter-spacing:-0.829px;">Basic</span>
<span class="t" style="left:416.2px;top:156px;letter-spacing:-1.261px;">NTFS</span>
<span class="t" style="left:487.5px;top:156px;letter-spacing:-0.128px;">Healthy (Boot, Page File, Crash Dump, Primary Partition)</span>
<span class="t" style="left:233.6px;top:404px;font-weight:bold;letter-spacing:-0.393px;">Disk 0</span>
<span class="t" style="left:212.6px;top:419px;letter-spacing:-0.769px;">Basic</span>
<span class="t" style="left:212.6px;top:434px;letter-spacing:-0.842px;">238.46 GB</span>
<span class="t" style="left:212.6px;top:449px;letter-spacing:-0.031px;">Online</span>
<span class="t" style="left:315.5px;top:436px;letter-spacing:-0.543px;">260 MB</span>
<span class="t" style="left:315.5px;top:451px;letter-spacing:-0.527px;">Healthy (EFI Sys</span>
<span class="t" style="left:413.6px;top:421px;font-weight:bold;letter-spacing:-0.267px;background:#fff;height:15px;line-height:15px;margin-top:0.5px;">Windows-SSD  (C:)</span>
<span class="t" style="left:413.6px;top:436px;letter-spacing:-0.875px;background:#fff;height:15px;line-height:15px;margin-top:0.5px;">237.23 GB NTFS</span>
<span class="t" style="left:413.6px;top:451px;letter-spacing:-0.180px;background:#fff;height:15px;line-height:15px;margin-top:0.5px;">Healthy (Boot, P</span>
<span class="t" style="left:631.6px;top:436px;letter-spacing:-0.576px;">1000 MB</span>
<span class="t" style="left:233.6px;top:503px;font-weight:bold;letter-spacing:-0.560px;">Disk 1</span>
<span class="t" style="left:212.6px;top:518px;letter-spacing:-0.769px;">Basic</span>
<span class="t" style="left:212.6px;top:533px;letter-spacing:-0.842px;">931.50 GB</span>
<span class="t" style="left:212.6px;top:548px;letter-spacing:-0.031px;">Online</span>
<span class="t" style="left:315.5px;top:520px;font-weight:bold;letter-spacing:-0.234px;">Data  (D:)</span>
<span class="t" style="left:315.5px;top:535px;letter-spacing:-0.832px;">931.50 GB NTFS</span>
<span class="t" style="left:315.5px;top:550px;letter-spacing:-0.045px;">Healthy (Primary Partition)</span>
<span class="t" style="left:224.6px;top:664px;letter-spacing:-0.143px;">Unallocated</span>
<span class="t" style="left:308.6px;top:664px;letter-spacing:0.032px;">Primary partition</span>
<span class="t" style="left:809px;top:88px;font-weight:bold;letter-spacing:-0.431px;">Actions</span>
<span class="t" style="left:811.4px;top:112px;letter-spacing:-0.101px;">Disk Management</span>
<span class="t" style="left:980px;top:115px;letter-spacing:0.312px;">5</span>
<span class="t" style="left:835.4px;top:136px;letter-spacing:0.052px;">More Actions</span>
<span class="t" style="left:980px;top:139px;letter-spacing:0.312px;">4</span>
<span class="t" style="left:535.6px;top:456px;letter-spacing:-0.440px;">Open</span>
<span class="t" style="left:535.6px;top:478px;letter-spacing:-0.312px;">Explore</span>
<span class="t" style="left:535.6px;top:507px;color:#6d6d6d;letter-spacing:-0.045px;">Mark Partition as Active</span>
<span class="t" style="left:535.6px;top:529px;letter-spacing:-0.253px;">Change Drive Letter and Paths...</span>
<span class="t" style="left:535.6px;top:551px;color:#6d6d6d;letter-spacing:-0.246px;">Format...</span>
<span class="t" style="left:535.6px;top:580px;color:#6d6d6d;letter-spacing:-0.227px;">Extend Volume...</span>
<span class="t" style="left:535.6px;top:602px;letter-spacing:-0.211px;">Shrink Volume...</span>
<span class="t" style="left:535.6px;top:624px;color:#6d6d6d;letter-spacing:-0.254px;">Delete Volume...</span>
<span class="t" style="left:535.6px;top:653px;letter-spacing:-0.240px;">Properties</span>
<span class="t" style="left:535.6px;top:682px;letter-spacing:-0.122px;">Help</span>


</body></html>
